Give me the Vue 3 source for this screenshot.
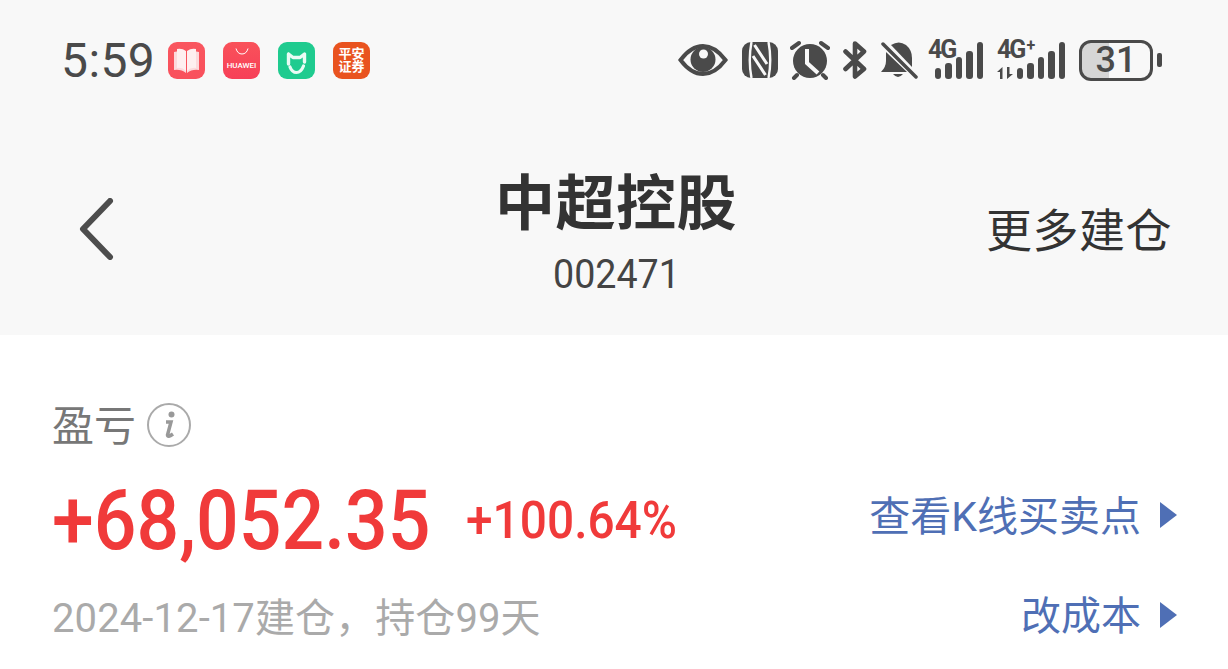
<script setup>
const bars = [11, 16, 22, 28, 37]
</script>

<template>
  <div class="page">
    <header class="top">
      <div class="status">
        <div class="left">
          <span class="time">5:59</span>
          <div class="apps">
            <div class="app book">
              <svg width="27" height="27" viewBox="0 0 27 27"><path d="M1 5 Q8 3 13 6 V26 Q8 22 1 23Z M26 5 Q19 3 14 6 V26 Q19 22 26 23Z" fill="#fcd9dc"/><path d="M4 2 Q9 1 13 4 V24 Q9 20 4 21Z M23 2 Q18 1 14 4 V24 Q18 20 23 21Z" fill="#feeff0"/></svg>
            </div>
            <div class="app huawei">
              <svg class="bag" width="14" height="7" viewBox="0 0 14 7"><path d="M1 .5 Q2.500 6 7 6 Q11.500 6 13 .5" fill="none" stroke="#fff" stroke-width="1"/></svg>
              <span class="hw">HUAWEI</span>
            </div>
            <div class="app mi">
              <svg width="37" height="37" viewBox="0 0 37 37"><path d="M10.500 12 L15 15.500 H22 L26.500 12 V20 M10.500 12 V22" fill="none" stroke="#eafbf5" stroke-width="3.400" stroke-linejoin="round" stroke-linecap="round"/><path d="M12 25 Q14 30.500 18.500 30.500 Q23 30.500 25.500 24" fill="none" stroke="#eafbf5" stroke-width="3.200" stroke-linecap="round"/></svg>
            </div>
            <div class="app pingan"><span>平安</span><span>证券</span></div>
          </div>
        </div>
        <div class="right">
          <svg class="ic i1" width="50" height="34" viewBox="0 0 50 34"><path d="M2.500 17 Q13 3 25 3 Q37 3 47.500 17 Q37 31 25 31 Q13 31 2.500 17Z" fill="none" stroke="#4a4a4a" stroke-width="4"/><circle cx="25" cy="16.500" r="12.500" fill="#4a4a4a"/><circle cx="25.500" cy="11" r="4.500" fill="#f8f8f8"/></svg>
          <svg class="ic i2" width="36" height="36" viewBox="0 0 36 36"><rect width="36" height="36" rx="9" fill="#4a4a4a"/><path d="M9.500 0 Q6 18 9.500 36 M26.500 0 Q30 18 26.500 36" fill="none" stroke="#f8f8f8" stroke-width="2.400"/><path d="M12.500 3 L25 22 M11 14 L23.500 33" fill="none" stroke="#f8f8f8" stroke-width="3"/></svg>
          <svg class="ic i3" width="40" height="40" viewBox="0 0 40 40"><circle cx="20" cy="21" r="17" fill="#4a4a4a"/><path d="M2 8 L9 3 M38 8 L31 3 M7 35 L4 38 M33 35 L36 38" stroke="#4a4a4a" stroke-width="4" stroke-linecap="round"/><path d="M17 9 V23 L28 33" fill="none" stroke="#f8f8f8" stroke-width="4"/></svg>
          <svg class="ic i4" width="24" height="38" viewBox="0 0 24 38"><path d="M2.500 10.500 L21 28 L12 35.500 V2.500 L21 10.500 L2.500 28" fill="none" stroke="#4a4a4a" stroke-width="4.600" stroke-linejoin="round" stroke-linecap="round"/></svg>
          <svg class="ic i5" width="38" height="38" viewBox="0 0 38 38"><path d="M11 4 Q19 -1 26 4 Q32 9 32 17 V26Z" fill="#4a4a4a"/><path d="M6 11 L27 31 H1 Q6 26 6 20Z" fill="#4a4a4a"/><path d="M13 33 Q18 39 23 33Z" fill="#4a4a4a"/><path d="M3 3 L36 36" stroke="#4a4a4a" stroke-width="3.500" stroke-linecap="round"/></svg>
          <div class="net net1">
            <span class="g">4G</span>
            <div class="bars"><i v-for="h in bars" :key="h" :style="{ height: h + 'px' }"></i></div>
          </div>
          <div class="net net2">
            <span class="g">4G<sup>+</sup></span>
            <svg class="arrows" width="16" height="12" viewBox="0 0 16 12"><path d="M0 5 L5.500 0 V12 H3 V5Z M10 0 H12.500 V7 H16 L10 12Z" fill="#4a4a4a"/></svg>
            <div class="bars"><i v-for="h in bars" :key="h" :style="{ height: h + 'px' }"></i></div>
          </div>
          <div class="battery">
            <div class="cell"><span class="num">31</span></div>
            <div class="cap"></div>
          </div>
        </div>
      </div>
      <div class="nav">
        <div class="back">
          <svg width="36" height="62" viewBox="0 0 36 62"><path d="M32 3 L5 31 L32 59" fill="none" stroke="#4d4d4d" stroke-width="6" stroke-linecap="round" stroke-linejoin="round"/></svg>
        </div>
        <div class="title">
          <h1>中超控股</h1>
          <p><span>002471</span></p>
        </div>
        <div class="more">更多建仓</div>
      </div>
    </header>
    <section class="body">
      <div class="label">
        <span class="lt">盈亏</span>
        <svg width="46" height="46" viewBox="0 0 46 46"><circle cx="23" cy="23" r="21" fill="none" stroke="#aaa" stroke-width="2"/><circle cx="25.500" cy="12.500" r="3" fill="#999"/><path d="M20 20 H25 L21.500 33 Q21.500 36 27 32" fill="none" stroke="#999" stroke-width="3.500"/></svg>
      </div>
      <div class="row pl">
        <div class="vals">
          <span class="big">+68,052.35</span>
          <span class="pct">+100.64%</span>
        </div>
        <a class="link">查看K线买卖点<b></b></a>
      </div>
      <div class="row foot">
        <span class="date">2024-12-17建仓，持仓99天</span>
        <a class="link short">改成本<b></b></a>
      </div>
    </section>
  </div>
</template>

<style scoped>
.page {
  width: 1228px;
  height: 669px;
  overflow: hidden;
  background: #fff;
  font-family: Roboto, "Noto Sans CJK SC", sans-serif;
}
.top {
  height: 335px;
  background: #f8f8f8;
}
.status {
  height: 120px;
  padding: 0 66px 0 61px;
  display: flex;
  align-items: center;
  justify-content: space-between;
}
.left, .apps, .right { display: flex; align-items: center; }
.time {
  font-size: 48px;
  color: #4a4a4a;
  width: 107px;
  letter-spacing: 0.4px;
}
.apps { gap: 18px; }
.app {
  width: 37px;
  height: 37px;
  border-radius: 9px;
  display: flex;
  flex-direction: column;
  align-items: center;
  justify-content: center;
}
.book { background: linear-gradient(#f9565f, #f9505c); }
.huawei { background: linear-gradient(#f9525a, #f73f58); justify-content: flex-start; padding-top: 6px; box-sizing: border-box; }
.hw { font-size: 8px; font-weight: 500; color: #fff; margin-top: 6px; line-height: 10px; white-space: nowrap; }
.mi { background: #1fcb8f; }
.pingan { background: #e9531f; color: #fff; font-size: 13px; line-height: 13px; font-weight: 700; }
.right { color: #4a4a4a; }
.i1 { margin-right: 14px; }
.i2 { margin-right: 12px; }
.i3 { margin-right: 13px; }
.i4 { margin-right: 13px; }
.i5 { margin-right: 10px; }
.net { height: 40px; position: relative; }
.net1 { width: 55px; margin-right: 14px; }
.net2 { width: 68px; margin-right: 14px; }
.g {
  font-size: 25px;
  font-weight: 700;
  line-height: 22px;
  position: absolute;
  left: 0;
  top: -1px;
  letter-spacing: -2px;
  white-space: nowrap;
}
.net2 sup { font-size: 16px; line-height: 0; vertical-align: 7px; margin-left: 2px; }
.arrows { position: absolute; left: 0; bottom: 1px; }
.bars {
  position: absolute;
  right: 0;
  bottom: 1px;
  display: flex;
  align-items: flex-end;
  gap: 4px;
}
.bars i {
  display: block;
  width: 6.500px;
  border-radius: 3px;
  background: #4a4a4a;
}
.battery { display: flex; align-items: center; gap: 4px; }
.cell {
  width: 74px;
  height: 41px;
  box-sizing: border-box;
  border: 3px solid #4a4a4a;
  border-radius: 12px;
  background: linear-gradient(90deg, #d6d6d6 40%, transparent 40%);
  display: flex;
  align-items: center;
  justify-content: center;
}
.num { font-size: 36px; font-weight: 500; line-height: 34px; color: #4a4a4a; }
.cap { width: 5px; height: 14px; border-radius: 2px; background: #4a4a4a; }
.nav {
  display: grid;
  grid-template-columns: 1fr auto 1fr;
  align-items: start;
  padding: 0 56px 0 60px;
  height: 215px;
}
.back { display: flex; margin: 78px 0 0 18px; }
.title { text-align: center; padding-top: 50px; }
h1 {
  margin: 0;
  font-size: 60px;
  letter-spacing: 0.5px;
  line-height: 70px;
  font-weight: 700;
  color: #333;
}
p {
  margin: 14px 0 0;
  height: 42px;
  font-size: 40px;
  line-height: 42px;
  color: #444;
  display: flex;
  justify-content: center;
}
p span { display: block; transform: scaleX(0.94); }
.more {
  justify-self: end;
  font-size: 46px;
  letter-spacing: 0.5px;
  line-height: 54px;
  color: #333;
  margin-top: 84px;
}
.body { padding: 0 51px 0 52px; }
.label {
  display: flex;
  align-items: center;
  gap: 10px;
  padding-top: 67px;
  height: 46px;
  font-size: 42px;
  color: #777;
}
.lt { padding-bottom: 6px; }
.row {
  display: flex;
  align-items: center;
  justify-content: space-between;
}
.pl { margin-top: 23px; height: 84px; }
.foot { margin-top: 33px; height: 50px; }
.vals { display: flex; align-items: center; gap: 36px; color: #f03a3a; padding-top: 16px; }
.big {
  display: block;
  width: 378px;
  font-size: 84px;
  font-weight: 500;
  line-height: 84px;
  white-space: nowrap;
  transform: scaleX(0.895);
  transform-origin: left center;
}
.pct {
  display: block;
  width: 209px;
  font-size: 52px;
  font-weight: 500;
  line-height: 84px;
  white-space: nowrap;
  transform: scaleX(0.92);
  transform-origin: left center;
}
.link {
  display: flex;
  align-items: center;
  font-size: 41px;
  color: #4f6fb5;
  gap: 19px;
}
.short { font-size: 40px; }
.link b {
  width: 0;
  height: 0;
  margin-top: 4px;
  border-left: 17px solid #4f6fb5;
  border-top: 13px solid transparent;
  border-bottom: 13px solid transparent;
}
.date { font-size: 40px; letter-spacing: 0.1px; color: #aaa; padding-top: 4px; }
</style>
